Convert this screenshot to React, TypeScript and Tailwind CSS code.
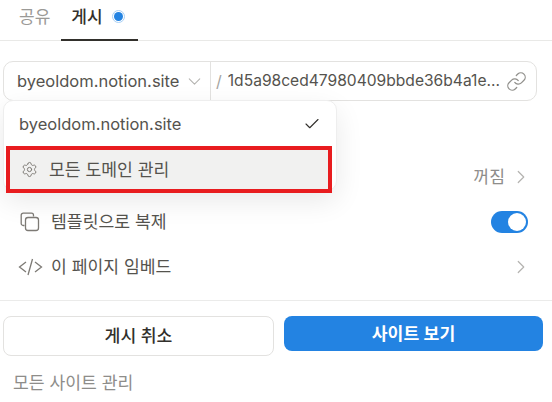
import { Check, ChevronDown, ChevronRight, Link, Settings } from 'lucide-react';

const font = { fontFamily: '"Inter", "Noto Sans CJK KR", sans-serif' };

function DomainMenu() {
  return (
    <div className="absolute left-[3px] top-[100px] z-10 h-[91px] w-[334px] rounded-[10px] border border-[#eeeeee] bg-white shadow-[0_10px_28px_rgba(0,0,0,0.09)]">
      <div className="flex h-[46px] items-center justify-between pl-[15px] pr-[15px]">
        <span className="text-[16.5px] text-[#55534e]">byeoldom.notion.site</span>
        <Check size={18} strokeWidth={1.5} className="text-[#32302c]" />
      </div>
    </div>
  );
}

function Highlight() {
  return (
    <div className="absolute left-[6px] top-[146px] z-20 flex h-[47px] w-[326px] items-center gap-[11px] border-[4px] border-[#e81c1f] bg-[#f1f1f0] pl-[11px]">
      <Settings size={17} strokeWidth={1.4} className="text-[#7d7a75]" />
      <span className="text-[17.2px] text-[#55534e]">모든 도메인 관리</span>
    </div>
  );
}

export default function App() {
  return (
    <div className="relative flex h-[402px] w-[552px] flex-col overflow-hidden bg-white" style={font}>
      {/* Tabs */}
      <div className="flex h-[41px] items-start gap-[11px] border-b border-[#e9e9e7] pl-[19px]">
        <div className="pt-[4px] text-[17px] leading-[26px] text-[#9b9a97]">공유</div>
        <div className="flex h-[41px] w-[77px] items-start gap-[9px] border-b-2 border-[#32302c] pl-[10px] pt-[4px]">
          <span className="text-[17px] font-medium leading-[26px] text-[#32302c]">게시</span>
          <span className="mt-[6px] flex h-[13px] w-[13px] items-center justify-center rounded-full border border-[#a9d0f5] bg-white">
            <span className="h-[9px] w-[9px] rounded-full bg-[#2383e2]" />
          </span>
        </div>
      </div>

      {/* Url field */}
      <div className="mx-[3px] mt-[20px] flex h-[40px] w-[534px] items-center rounded-[10px] border border-[#e3e2e0] bg-white">
        <div className="flex h-full w-[207px] shrink-0 items-center gap-[5px] border-r border-[#e3e2e0] pl-[13px]">
          <span className="text-[16.5px] text-[#55534e]">byeoldom.notion.site</span>
          <ChevronDown size={21} strokeWidth={1.2} className="text-[#b4b3b0]" />
        </div>
        <span className="ml-[5px] text-[16px] text-[#a5a4a1]">/</span>
        <span className="ml-[6px] text-[15.6px] text-[#55534e]">1d5a98ced47980409bbde36b4a1e...</span>
        <Link size={21} strokeWidth={1.4} className="ml-auto mr-[9px] text-[#91908c]" />
      </div>

      {/* Options */}
      <div className="mt-[54px] flex h-[44px] items-center justify-end gap-[5px] pr-[20px]">
        <span className="text-[17.2px] text-[#8e8d8a]">꺼짐</span>
        <ChevronRight size={22} strokeWidth={1.3} className="text-[#b4b3b0]" />
      </div>
      <div className="flex h-[46px] items-center pl-[20px] pr-[24px]">
        <svg width="20" height="20" viewBox="0 0 20 20" fill="none" stroke="#7d7a75" strokeWidth="1.3">
          <path d="M4.5 13.5H3.2A2 2 0 0 1 1.2 11.5V3.2A2 2 0 0 1 3.2 1.2H11.5A2 2 0 0 1 13.5 3.2V4.5" />
          <rect x="5.5" y="5.5" width="13" height="13" rx="2.5" />
        </svg>
        <span className="ml-[11px] text-[17.2px] text-[#55534e]">템플릿으로 복제</span>
        <div className="ml-auto flex h-[22px] w-[37px] items-center justify-end rounded-full bg-[#2383e2] pr-[2px]">
          <span className="h-[18px] w-[18px] rounded-full bg-white" />
        </div>
      </div>
      <div className="flex h-[44px] items-center pl-[18px] pr-[20px]">
        <svg width="25" height="18" viewBox="0 0 25 18" fill="none" stroke="#7d7a75" strokeWidth="1.3">
          <path d="M8 4 1.5 9 8 14M14.5 1 10 17M17 4l6.5 5-6.5 5" />
        </svg>
        <span className="ml-[8px] text-[17.2px] text-[#55534e]">이 페이지 임베드</span>
        <ChevronRight size={22} strokeWidth={1.3} className="ml-auto text-[#b4b3b0]" />
      </div>

      {/* Actions */}
      <div className="mt-[11px] flex gap-[10px] border-t border-[#ebebea] px-[3px] pt-[15px] pr-[9px]">
        <button className="h-[40px] w-[271px] rounded-[8px] border border-[#e3e2e0] bg-white text-[17.2px] font-medium text-[#32302c]">
          게시 취소
        </button>
        <button className="h-[35px] w-[259px] rounded-[8px] bg-[#2383e2] text-[17.2px] font-semibold text-white">
          사이트 보기
        </button>
      </div>
      <div className="mt-[14px] pl-[13px] text-[17.2px] text-[#8e8d8a]">모든 사이트 관리</div>

      <DomainMenu />
      <Highlight />
    </div>
  );
}
